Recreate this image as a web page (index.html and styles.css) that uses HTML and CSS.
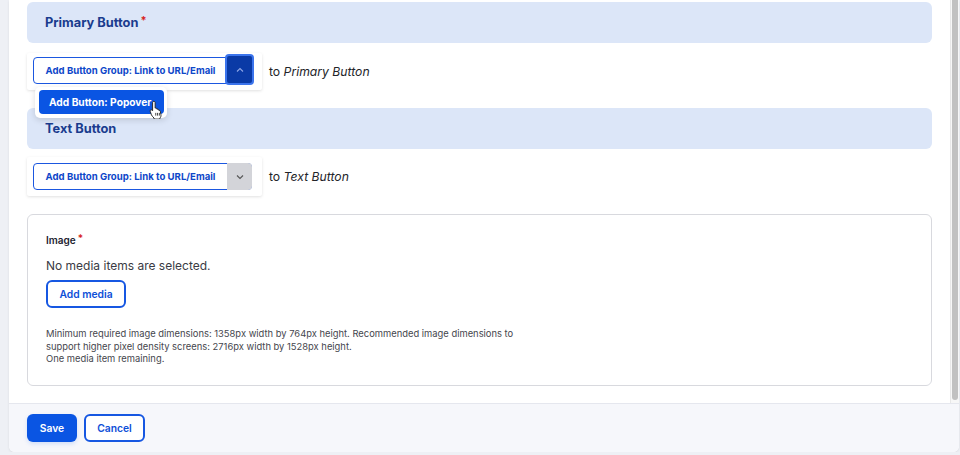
FILE: index.html
```html
<!DOCTYPE html>
<html lang="en">

<head>
    <meta charset="UTF-8">
    <title>Edit Button Group</title>
    <link rel="stylesheet" href="styles.css">
</head>

<body>
    <div class="dialog">
        <div class="dialog-body">
            <div class="dialog-content">
                <div class="group-title group-title--first">Primary Button<span class="req">*</span></div>
                <div class="add-row add-row--first">
                    <div class="add-box">
                        <div class="split">
                            <span class="split-main">Add Button Group: Link to URL/Email</span>
                            <span class="split-toggle is-open">
                                <svg width="8" height="6" viewBox="0 0 8 6"><path d="M1 4.5 L4 1.5 L7 4.5" fill="none" stroke="#8ea6e6" stroke-width="1.1"/></svg>
                            </span>
                        </div>
                        <div class="popover">
                            <span class="popover-item">Add Button: Popover</span>
                        </div>
                        <svg class="cursor" width="15" height="19" viewBox="0 0 14 18">
                            <path d="M4.5 1.2c.7 0 1.2.5 1.2 1.2v5.3l.4-.1c.6-.1 1.1.3 1.2.8l.1.3.3-.1c.6-.1 1.1.2 1.3.8l.1.3.2 0c.6-.1 1.2.3 1.3.9l.6 3.2c.2 1.4-.2 2.6-1 3.4v.9H4.7v-1c-.9-.7-1.9-1.9-2.5-3L1.1 10.9c-.3-.6 0-1.3.6-1.5.5-.2 1 0 1.3.4l.3.4V2.4c0-.7.5-1.2 1.2-1.2z" fill="#fff" stroke="#222" stroke-width="0.9" stroke-linejoin="round"/>
                            <path d="M6.3 12.2v2.6M8 12.2v2.6M9.7 12.2v2.6" stroke="#222" stroke-width="0.8"/>
                        </svg>
                    </div>
                    <span class="to-label">to <em>Primary Button</em></span>
                </div>

                <div class="group-title group-title--second">Text Button</div>
                <div class="add-row add-row--second">
                    <div class="add-box">
                        <div class="split">
                            <span class="split-main">Add Button Group: Link to URL/Email</span>
                            <span class="split-toggle">
                                <svg width="8" height="6" viewBox="0 0 8 6"><path d="M1 1.5 L4 4.5 L7 1.5" fill="none" stroke="#555" stroke-width="1.1"/></svg>
                            </span>
                        </div>
                    </div>
                    <span class="to-label">to <em>Text Button</em></span>
                </div>

                <div class="media-field">
                    <div class="media-label">Image<span class="req">*</span></div>
                    <p class="media-empty">No media items are selected.</p>
                    <button class="btn btn--outline btn--media">Add media</button>
                    <div class="media-desc">
                        Minimum required image dimensions: 1358px width by 764px height. Recommended image dimensions to<br>
                        support higher pixel density screens: 2716px width by 1528px height.<br>
                        One media item remaining.
                    </div>
                </div>
            </div>
            <div class="scrollbar"><div class="scrollbar-thumb"></div></div>
        </div>
        <div class="dialog-footer">
            <button class="btn btn--primary">Save</button>
            <button class="btn btn--outline">Cancel</button>
        </div>
    </div>
</body>

</html>
```

FILE: styles.css
```css
body {
    font-family: Inter, "Noto Sans", Arial, sans-serif;
    margin: 0;
    background-color: #eef0f5;
    color: #222330;
}

.dialog {
    margin-left: 9px;
    width: 950px;
    height: 452px;
    display: flex;
    flex-direction: column;
    background-color: #fff;
    border-radius: 0 0 6px 6px;
    box-shadow: 0 1px 3px rgba(0, 0, 0, 0.08);
    overflow: hidden;
}

.dialog-body {
    display: flex;
    height: 403px;
}

.dialog-content {
    flex: 1;
    padding: 2px 18px 0 18px;
    position: relative;
}

.scrollbar {
    width: 8px;
    border-left: 1px solid #e8e8e8;
    background-color: #f7f7f7;
    display: flex;
    justify-content: center;
}

.scrollbar-thumb {
    width: 6px;
    height: 400px;
    background-color: #c1c1c1;
    border-radius: 0 0 3px 3px;
}

.group-title {
    height: 41px;
    display: flex;
    align-items: center;
    padding-left: 18px;
    background-color: #dce6f8;
    border-radius: 6px;
    color: #1a3c8e;
    font-size: 12.8px;
    font-weight: 700;
}

.group-title--second {
    margin-top: 18px;
}

.req {
    color: #d72222;
    font-size: 11px;
    margin-left: 2px;
    align-self: flex-start;
    margin-top: 11px;
}

.add-row {
    display: flex;
    align-items: center;
    gap: 7px;
}

.add-row--first {
    margin-top: 10px;
}

.add-row--second {
    margin-top: 8px;
}

.add-box {
    position: relative;
    padding: 4px 10px 6px 6px;
    background-color: #fff;
    box-shadow: 0 1px 3px rgba(0, 0, 0, 0.12);
    border-radius: 2px;
}

.add-row--second .add-box {
    padding: 6px 10px 6px 6px;
}

.split {
    display: flex;
    height: 27px;
    width: 219px;
    border: 1px solid #1b57e0;
    border-radius: 4px;
    box-sizing: border-box;
}

.split-main {
    flex: 1;
    display: flex;
    align-items: center;
    justify-content: center;
    color: #0e47c9;
    font-size: 9.6px;
    font-weight: 700;
}

.split-toggle {
    width: 25px;
    display: flex;
    align-items: center;
    justify-content: center;
    background-color: #d3d4d9;
    margin: -1px -1px -1px 0;
    border-radius: 0 4px 4px 0;
}

.split-toggle.is-open {
    background-color: #0a3aa6;
    box-shadow: 0 0 0 2px #3b74ec;
    border-radius: 2px;
    margin: -2px -1px 0 0;
}

.popover {
    position: absolute;
    left: 8px;
    top: 34px;
    padding: 3px 3px 4px 4px;
    background-color: #fff;
    border-radius: 5px;
    box-shadow: 0 2px 6px rgba(0, 0, 0, 0.14);
    z-index: 2;
}

.popover-item {
    display: block;
    padding: 6px 12px 6px 10px;
    background-color: #0a55e3;
    color: #fff;
    font-size: 10.2px;
    font-weight: 700;
    border-radius: 4px;
    white-space: nowrap;
}

.cursor {
    position: absolute;
    left: 122px;
    top: 47px;
    z-index: 3;
}

.to-label {
    font-size: 12.2px;
    color: #232429;
}

.media-field {
    margin-top: 18px;
    border: 1px solid #d8d9de;
    border-radius: 6px;
    padding: 19px 18px 20px 18px;
    height: 172px;
    box-sizing: border-box;
}

.media-label {
    display: flex;
    font-size: 10px;
    font-weight: 600;
    color: #222330;
}

.media-label .req {
    margin-top: -2px;
    font-size: 10px;
}

.media-empty {
    margin: 12px 0 0 0;
    font-size: 12px;
    color: #3a3b44;
}

.btn {
    font-family: Inter, "Noto Sans", Arial, sans-serif;
    font-size: 10.3px;
    font-weight: 600;
    height: 28px;
    border-radius: 6px;
    cursor: pointer;
    box-sizing: border-box;
    padding: 0;
    white-space: nowrap;
}

.btn--outline {
    background: #fff;
    color: #0e4fd8;
    border: 2px solid #1657e2;
}

.btn--primary {
    background: #0a55e3;
    color: #fff;
    border: none;
    width: 50px;
    box-shadow: 0 2px 4px rgba(10, 85, 227, 0.15);
}

.btn--media {
    margin-top: 7px;
    width: 80px;
}

.media-desc {
    margin-top: 20px;
    font-size: 9.4px;
    line-height: 12.5px;
    color: #45464d;
}

.dialog-footer {
    flex: 1;
    display: flex;
    align-items: center;
    gap: 7px;
    padding: 0 18px;
    background-color: #f6f7fb;
    border-top: 1px solid #e5e7ee;
}

.dialog-footer .btn--outline {
    width: 61px;
}
```
